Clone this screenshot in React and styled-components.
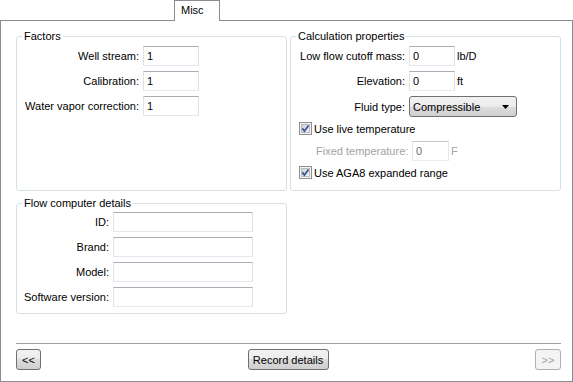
import React from 'react'
import styled, { createGlobalStyle } from 'styled-components'

const GlobalStyle = createGlobalStyle`
  html, body { margin: 0; padding: 0; background: #fff; }
  body {
    font-family: "Liberation Sans", Arial, sans-serif;
    font-size: 11px;
    color: #000;
  }
  * { box-sizing: border-box; }
`

const CheckBox = () => (
    <svg width='13' height='13' viewBox='0 0 13 13'>
        <defs>
            <linearGradient id='cbFill' x1='0' y1='0' x2='1' y2='1'>
                <stop offset='0' stopColor='#c9cdd3' />
                <stop offset='1' stopColor='#f4f4f4' />
            </linearGradient>
        </defs>
        <rect x='0.5' y='0.5' width='12' height='12' fill='#f4f4f4' stroke='#8e8f8f' />
        <rect x='2.5' y='2.5' width='8' height='8' fill='url(#cbFill)' stroke='#b8bcc2' />
        <path d='M3.3 6.4 L5.4 9 L9.6 3.4' fill='none' stroke='#3c5494' strokeWidth='1.7' />
    </svg>
)

const App = () => {
    return (
        <>
            <GlobalStyle />
            <Window>
                <TabStrip>
                    <Tab>Misc</Tab>
                </TabStrip>
                <Panel>
                    <Columns>
                        <Column>
                            <Group $h={155}>
                                <GroupTitle>Factors</GroupTitle>
                                <Body>
                                    <FieldRow $mt={3}>
                                        <Label $w={118}>Well stream:</Label>
                                        <TextBox $w={56} readOnly value='1' />
                                    </FieldRow>
                                    <FieldRow $mt={5}>
                                        <Label $w={118}>Calibration:</Label>
                                        <TextBox $w={56} readOnly value='1' />
                                    </FieldRow>
                                    <FieldRow $mt={5}>
                                        <Label $w={118}>Water vapor correction:</Label>
                                        <TextBox $w={56} readOnly value='1' />
                                    </FieldRow>
                                </Body>
                            </Group>
                            <Group $h={111}>
                                <GroupTitle>Flow computer details</GroupTitle>
                                <Body>
                                    {['ID:', 'Brand:', 'Model:', 'Software version:'].map((l, i) => (
                                        <FieldRow key={l} $mt={i === 0 ? 2 : 5}>
                                            <Label $w={88}>{l}</Label>
                                            <TextBox $w={140} readOnly value='' />
                                        </FieldRow>
                                    ))}
                                </Body>
                            </Group>
                        </Column>
                        <Column>
                            <Group $h={155}>
                                <GroupTitle>Calculation properties</GroupTitle>
                                <Body>
                                    <FieldRow $mt={3}>
                                        <Label $w={110}>Low flow cutoff mass:</Label>
                                        <TextBox $w={46} readOnly value='0' />
                                        <Unit>lb/D</Unit>
                                    </FieldRow>
                                    <FieldRow $mt={5}>
                                        <Label $w={110}>Elevation:</Label>
                                        <TextBox $w={46} readOnly value='0' />
                                        <Unit>ft</Unit>
                                    </FieldRow>
                                    <FieldRow $mt={5} $h={21}>
                                        <Label $w={110}>Fluid type:</Label>
                                        <Select>
                                            <span>Compressible</span>
                                            <svg width='7' height='4' viewBox='0 0 7 4'>
                                                <path d='M0 0 H7 L3.5 4 Z' fill='#000' />
                                            </svg>
                                        </Select>
                                    </FieldRow>
                                    <CheckRow $mt={3}>
                                        <CheckBox />
                                        <span>Use live temperature</span>
                                    </CheckRow>
                                    <FieldRow $mt={4} $indent={21}>
                                        <Label $w={92} $disabled>Fixed temperature:</Label>
                                        <TextBox $w={37} $disabled readOnly value='0' />
                                        <Unit $disabled>F</Unit>
                                    </FieldRow>
                                    <CheckRow $mt={3}>
                                        <CheckBox />
                                        <span>Use AGA8 expanded range</span>
                                    </CheckRow>
                                </Body>
                            </Group>
                        </Column>
                    </Columns>
                    <Footer>
                        <Separator />
                        <ButtonRow>
                            <Button $w={25}>&lt;&lt;</Button>
                            <Button $w={81}>Record details</Button>
                            <Button $w={26} disabled>&gt;&gt;</Button>
                        </ButtonRow>
                    </Footer>
                </Panel>
            </Window>
        </>
    )
}

const Window = styled.div`
    width: 573px;
    height: 382px;
    display: flex;
    flex-direction: column;
    background: #fff;
`
const TabStrip = styled.div`
    height: 20px;
    display: flex;
    align-items: flex-end;
    padding-left: 174px;
`
const Tab = styled.div`
    position: relative;
    z-index: 1;
    width: 46px;
    height: 21px;
    margin-bottom: -1px;
    padding: 3px 0 0 6px;
    line-height: 13px;
    background: #fff;
    border: 1px solid #898c95;
    border-bottom: none;
`
const Panel = styled.div`
    height: 362px;
    border: 1px solid #898c95;
    display: flex;
    flex-direction: column;
    padding: 15px 11px 11px 15px;
`
const Columns = styled.div`
    display: grid;
    grid-template-columns: 271px 271px;
    column-gap: 3px;
    align-items: start;
`
const Column = styled.div`
    display: flex;
    flex-direction: column;
    gap: 12px;
`
const Group = styled.section`
    height: ${p => p.$h}px;
    border: 1px solid #d5dfe5;
    border-radius: 3px;
    padding: 0 4px;
    display: flex;
    flex-direction: column;
`
const GroupTitle = styled.div`
    align-self: flex-start;
    height: 13px;
    line-height: 13px;
    margin: -7px 0 0 1px;
    padding: 0 2px;
    background: #fff;
`
const Body = styled.div`
    display: flex;
    flex-direction: column;
`
const FieldRow = styled.div`
    display: flex;
    align-items: center;
    gap: 4px;
    height: ${p => p.$h || 20}px;
    margin-top: ${p => p.$mt || 0}px;
    padding-left: ${p => p.$indent || 0}px;
`
const Label = styled.label`
    width: ${p => p.$w}px;
    flex: none;
    text-align: right;
    white-space: nowrap;
    color: ${p => (p.$disabled ? '#a3a3a3' : '#000')};
`
const TextBox = styled.input`
    width: ${p => p.$w}px;
    height: 20px;
    flex: none;
    padding: 0 0 0 3px;
    border: 1px solid;
    border-color: ${p => (p.$disabled ? '#c4c7cc #e3e6ea #e8ecf0 #e3e6ea' : '#abadb3 #dbdfe6 #e3e9ef #e2e3ea')};
    background: #fff;
    font: inherit;
    color: ${p => (p.$disabled ? '#6d6d6d' : '#000')};
    outline: none;
`
const Unit = styled.span`
    margin-left: -2px;
    color: ${p => (p.$disabled ? '#a3a3a3' : '#000')};
`
const Select = styled.div`
    width: 108px;
    height: 21px;
    display: flex;
    align-items: center;
    justify-content: space-between;
    padding: 0 7px 0 3px;
    border: 1px solid #707070;
    border-radius: 3px;
    background: linear-gradient(#f2f2f2 0%, #ebebeb 50%, #dddddd 50%, #cfcfcf 100%);
`
const CheckRow = styled.label`
    display: flex;
    align-items: center;
    gap: 2px;
    height: 17px;
    margin-top: ${p => p.$mt || 0}px;
    padding-left: 4px;
`
const Footer = styled.div`
    margin-top: auto;
    display: flex;
    flex-direction: column;
`
const Separator = styled.div`
    height: 1px;
    background: #a0a0a0;
`
const ButtonRow = styled.div`
    margin-top: 5px;
    display: flex;
    justify-content: space-between;
    align-items: center;
`
const Button = styled.button`
    width: ${p => p.$w}px;
    height: 21px;
    padding: 0;
    border: 1px solid #707070;
    border-radius: 3px;
    background: linear-gradient(#f2f2f2 0%, #ebebeb 50%, #dddddd 50%, #cfcfcf 100%);
    font: inherit;
    color: #000;
    &:disabled {
        border-color: #adb2b5;
        background: #f4f4f4;
        color: #a0a0a0;
    }
`

export default App
